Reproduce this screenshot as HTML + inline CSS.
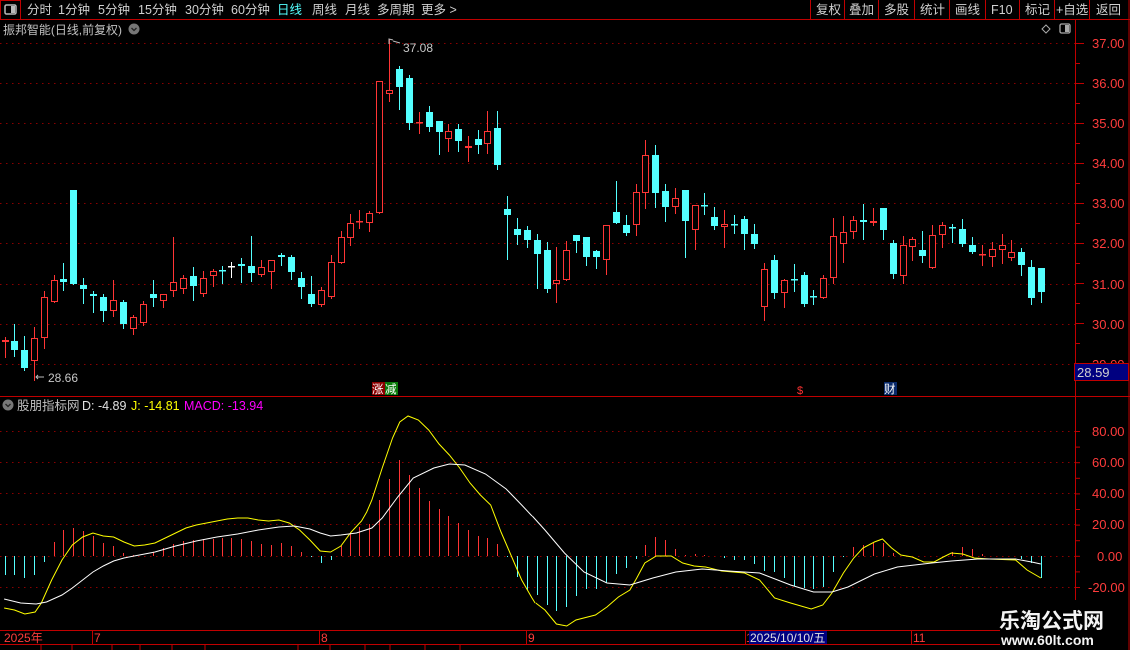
<!DOCTYPE html>
<html><head><meta charset="utf-8"><style>
html,body{margin:0;padding:0;background:#000;width:1130px;height:650px;overflow:hidden}
svg{display:block}
text{font-family:"Liberation Sans","Noto Sans CJK SC",sans-serif}
</style></head><body>
<svg id="s" width="1130" height="650" viewBox="0 0 1130 650" xmlns="http://www.w3.org/2000/svg">
<rect width="1130" height="650" fill="#000"/>
<!-- top bar -->
<line x1="0" y1="19.5" x2="1130" y2="19.5" stroke="#c00000"/>
<rect x="0.5" y="0.5" width="20" height="19" fill="none" stroke="#c00000"/>
<rect x="5" y="5" width="11" height="9" rx="1.5" fill="none" stroke="#bbb" stroke-width="1.5"/>
<rect x="11" y="6" width="4" height="7" fill="#bbb"/>
<g font-size="12.5" fill="#d0d0d0">
<text x="27" y="14">分时</text><text x="58" y="14">1分钟</text><text x="98" y="14">5分钟</text>
<text x="138" y="14">15分钟</text><text x="185" y="14">30分钟</text><text x="231" y="14">60分钟</text>
<text x="277" y="14" fill="#54ffff">日线</text><text x="312" y="14">周线</text><text x="345" y="14">月线</text>
<text x="377" y="14">多周期</text><text x="421" y="14">更多 &gt;</text>
<text x="816" y="14">复权</text><text x="849" y="14">叠加</text><text x="884" y="14">多股</text>
<text x="920" y="14">统计</text><text x="955" y="14">画线</text><text x="991" y="14">F10</text>
<text x="1025" y="14">标记</text><text x="1056" y="14">+自选</text><text x="1096" y="14">返回</text>
</g>
<g stroke="#c00000">
<line x1="810.5" y1="0" x2="810.5" y2="19"/><line x1="844.5" y1="0" x2="844.5" y2="19"/><line x1="878.5" y1="0" x2="878.5" y2="19"/>
<line x1="914.5" y1="0" x2="914.5" y2="19"/><line x1="949.5" y1="0" x2="949.5" y2="19"/><line x1="985.5" y1="0" x2="985.5" y2="19"/>
<line x1="1019.5" y1="0" x2="1019.5" y2="19"/><line x1="1054.5" y1="0" x2="1054.5" y2="19"/><line x1="1089.5" y1="0" x2="1089.5" y2="19"/>
<line x1="1129" y1="0" x2="1129" y2="650"/>
</g>
<text x="3" y="34" font-size="12" fill="#c0c0c0" textLength="119" lengthAdjust="spacingAndGlyphs">振邦智能(日线,前复权)</text>
<circle cx="134" cy="29" r="5.5" fill="#777"/><path d="M131.5 28 L134 30.5 L136.5 28" stroke="#222" fill="none" stroke-width="1.3"/>
<path d="M1046 25 L1050 29 L1046 33 L1042 29 Z" fill="none" stroke="#aaa"/>
<rect x="1060" y="24" width="10" height="9" rx="1.5" fill="none" stroke="#aaa" stroke-width="1.3"/><rect x="1065" y="25" width="4" height="7" fill="#aaa"/>
<!-- axes -->
<line x1="1075.5" y1="20" x2="1075.5" y2="630" stroke="#c00000"/>
<line x1="0" y1="396.5" x2="1130" y2="396.5" stroke="#c00000"/>
<g id="grid" stroke="#8b0000" stroke-dasharray="1.5 4.5"></g>
<g font-size="13" fill="#ff3c3c">
<text x="1092" y="48">37.00</text><text x="1092" y="88">36.00</text><text x="1092" y="128">35.00</text>
<text x="1092" y="168">34.00</text><text x="1092" y="208">33.00</text><text x="1092" y="248">32.00</text>
<text x="1092" y="289">31.00</text><text x="1092" y="329">30.00</text><text x="1092" y="369">29.00</text>
<text x="1092" y="436">80.00</text><text x="1092" y="467">60.00</text><text x="1092" y="498">40.00</text>
<text x="1092" y="529">20.00</text><text x="1097" y="561">0.00</text><text x="1088" y="592">-20.00</text>
</g>
<g id="ticks" stroke="#c00000"></g>
<rect x="1074.5" y="363.5" width="54" height="17" fill="#000080" stroke="#c00000"/>
<text x="1077" y="377" font-size="13" fill="#d0d0d0">28.59</text>
<g id="cand"></g>
<!-- markers -->
<path d="M389 44 L389 39 L393 40 M393 41 L400 43" stroke="#bbb" fill="none"/>
<text x="403" y="52" font-size="12" fill="#c8c8c8">37.08</text>
<path d="M44 377 L36 377 M38 375 L36 377 L38 379" stroke="#bbb" fill="none"/>
<text x="48" y="382" font-size="12" fill="#c8c8c8">28.66</text>
<rect x="372" y="382" width="13" height="13" fill="#8b0000"/><rect x="385" y="382" width="13" height="13" fill="#0a7a0a"/>
<text x="372" y="393" font-size="11.5" fill="#fff">涨</text><text x="385" y="393" font-size="11.5" fill="#fff">减</text>
<text x="797" y="394" font-size="11" fill="#ff3333">$</text>
<rect x="884" y="382" width="13" height="13" fill="#0a2a6a"/><text x="884" y="393" font-size="11.5" fill="#fff">财</text>
<!-- indicator header -->
<circle cx="8" cy="405" r="5.5" fill="#777"/><path d="M5.5 404 L8 406.5 L10.5 404" stroke="#222" fill="none" stroke-width="1.3"/>
<text x="17" y="410" font-size="12.5" fill="#c0c0c0">股朋指标网</text>
<text x="82" y="410" font-size="12.5" fill="#e0e0e0">D: -4.89</text>
<text x="131" y="410" font-size="12.5" fill="#ffff00">J: -14.81</text>
<text x="184" y="410" font-size="12.5" fill="#ff00ff">MACD: -13.94</text>
<g id="bars"></g>
<g transform="scale(1.033,1)">
<polyline fill="none" stroke="#ffff00" vector-effect="non-scaling-stroke" points="4,608 14,610 24,614 34,612 40,603 50,580 60,560 70,545 80,537 90,533 100,536 110,537 120,542 130,546 140,545 150,543 160,538 170,533 180,528 190,525 200,523 210,521 220,519 230,518 240,518 250,520 260,521 270,520 280,523 290,530 300,540 310,551 320,552 330,546 340,532 350,521 355,512 360,500 370,468 380,438 387,422 395,416 405,420 415,430 425,444 435,455 445,468 455,483 465,495 475,505 485,532 495,556 505,580 515,598 518,603"/>
<polyline fill="none" stroke="#ffffff" vector-effect="non-scaling-stroke" points="4,599 20,603 35,604 45,602 60,595 70,588 80,580 90,572 100,566 110,561 120,558 140,554 150,552 170,546 190,541 210,537 230,534 250,530 270,527 285,526 300,529 310,533 320,536 330,535 345,533 360,528 370,518 385,497 400,478 420,468 435,464 450,465 470,474 490,489 505,505 515,516"/>
</g>
<g transform="translate(530,0) scale(1.148,1) translate(-530,0)">
<polyline fill="none" stroke="#ffff00" vector-effect="non-scaling-stroke" points="535,603 543,610 553,624 562,626 570,620 587,615 597,607 607,597 617,590 623,578 630,563 640,556 653,556 663,563 673,566 683,567 697,571 717,573 730,580 743,598 757,603 775,609 785,605 793,593 803,573 812,558 820,548 830,542 837,539 845,548 853,555 863,557 873,562 882,562 890,557 897,553 907,554 917,558 930,559 953,560 963,570 975,578"/>
<polyline fill="none" stroke="#ffffff" vector-effect="non-scaling-stroke" points="532,516 543,530 560,553 577,572 597,583 617,585 637,578 657,572 680,569 703,571 730,573 757,585 777,592 793,592 807,587 830,574 850,567 880,563 897,561 920,559 953,559 967,562 975,564"/>
</g>
<!-- time axis -->
<line x1="0" y1="630.5" x2="1000" y2="630.5" stroke="#c00000"/>
<line x1="0" y1="644.5" x2="1000" y2="644.5" stroke="#c00000"/>
<g stroke="#c00000">
<line x1="92.5" y1="631" x2="92.5" y2="644"/><line x1="319.5" y1="631" x2="319.5" y2="644"/><line x1="526.5" y1="631" x2="526.5" y2="644"/>
<line x1="745.5" y1="631" x2="745.5" y2="644"/><line x1="911.5" y1="631" x2="911.5" y2="644"/>
<line x1="41" y1="645" x2="41" y2="650"/><line x1="72" y1="645" x2="72" y2="650"/><line x1="112" y1="645" x2="112" y2="650"/><line x1="140" y1="645" x2="140" y2="650"/><line x1="172" y1="645" x2="172" y2="650"/><line x1="205" y1="645" x2="205" y2="650"/><line x1="298" y1="645" x2="298" y2="650"/><line x1="330" y1="645" x2="330" y2="650"/><line x1="365" y1="645" x2="365" y2="650"/><line x1="390" y1="645" x2="390" y2="650"/><line x1="425" y1="645" x2="425" y2="650"/><line x1="460" y1="645" x2="460" y2="650"/>
</g>
<g font-size="12" fill="#ff3c3c">
<text x="4" y="642">2025年</text><text x="94" y="642">7</text><text x="321" y="642">8</text><text x="528" y="642">9</text><text x="746" y="642">1</text><text x="913" y="642">11</text>
</g>
<rect x="749" y="631" width="78" height="13" fill="#000080"/>
<text x="750" y="642" font-size="12" fill="#e0e0e0">2025/10/10/五</text>
<!-- watermark -->
<rect x="1000" y="600" width="128" height="50" fill="#000"/>
<text x="999" y="628" font-size="21" font-weight="bold" fill="#f4f4f4" font-family="'Noto Sans CJK SC',sans-serif">乐淘公式网</text>
<text x="1001" y="645" font-size="14" font-weight="bold" fill="#f4f4f4" font-family="'Liberation Serif',serif">www.60lt.com</text>
</svg>
<script>
var NS="http://www.w3.org/2000/svg";
function el(p,t,a){var e=document.createElementNS(NS,t);for(var k in a)e.setAttribute(k,a[k]);p.appendChild(e);return e;}
var g=document.getElementById('grid');
[43,83,123,163,203,243,284,324,364].forEach(function(y){el(g,'line',{x1:0,y1:y+.5,x2:1075,y2:y+.5});});
[431,462,493,524,556,587].forEach(function(y){el(g,'line',{x1:0,y1:y+.5,x2:1075,y2:y+.5});});
var tk=document.getElementById('ticks');
for(var y=43;y<=370;y+=20){el(tk,'line',{x1:1076,y1:y+.5,x2:(((y-43)%40)?1080:1084),y2:y+.5});}
for(var y=431;y<=600;y+=15.6){el(tk,'line',{x1:1076,y1:y+.5,x2:1080,y2:y+.5});}
var C=[
[4.5,340,342,337,357,'r'],[14,341,350,324,356,'c'],[24,350,368,336,370,'c'],[34,338,361,327,380,'r'],[44,297,338,291,348,'r'],
[54,280,302,275,302,'r'],[63,279,282,263,290,'c'],[73,190,284,190,284,'c'],[83,285,289,278,303,'c'],[93,294,296,291,312,'c'],
[103,297,311,294,321,'c'],[113,300,311,280,316,'r'],[123,302,324,300,328,'c'],[133,317,329,315,334,'r'],[143,304,323,301,325,'r'],
[153,294,298,280,306,'c'],[163,294,301,294,307,'r'],[173,282,291,237,296,'r'],[183,278,289,275,293,'r'],[193,276,286,267,300,'c'],
[203,278,294,271,296,'r'],[213,271,276,269,286,'r'],[222,270,271,266,283,'c'],[231,266,266,262,277,'w'],[241,264,266,258,282,'c'],
[251,266,273,236,281,'c'],[261,267,275,260,276,'r'],[271,260,272,260,288,'r'],[281,255,257,253,265,'c'],[291,257,272,255,279,'c'],
[301,278,287,272,298,'c'],[311,294,304,276,306,'c'],[321,290,305,287,306,'r'],[331,262,297,255,298,'r'],[341,237,263,231,263,'r'],
[350,223,238,214,245,'r'],[359,221,222,210,228,'r'],[369,213,223,211,231,'r'],[379,81,213,81,213,'r'],[389,90,94,39,101,'r'],
[399,69,87,66,109,'c'],[409,78,123,75,129,'c'],[419,122,123,112,133,'r'],[429,112,127,106,131,'c'],[439,121,132,121,154,'c'],
[448,131,139,124,151,'r'],[458,129,141,124,151,'c'],[468,146,148,136,161,'r'],[478,139,145,130,153,'c'],[487,131,144,111,153,'r'],
[497,128,165,111,169,'c'],[507,209,215,196,259,'c'],[517,229,235,218,244,'c'],[527,230,240,226,247,'c'],[537,240,254,234,288,'c'],
[547,250,289,242,292,'c'],[556,280,284,247,302,'r'],[566,250,280,241,280,'r'],[576,235,241,235,252,'c'],[586,237,257,237,265,'c'],
[596,251,257,250,268,'c'],[606,225,260,225,274,'r'],[616,212,223,181,223,'c'],[626,225,233,215,235,'c'],[636,192,225,184,235,'r'],
[645,155,193,140,208,'r'],[655,155,193,145,207,'c'],[665,191,207,184,221,'c'],[675,198,207,188,213,'r'],[685,190,221,190,257,'c'],
[695,205,230,205,249,'r'],[704,205,206,193,214,'c'],[714,217,226,207,229,'c'],[724,224,227,210,247,'r'],[734,224,225,215,233,'c'],
[744,219,234,216,249,'c'],[754,234,244,224,248,'c'],[764,269,307,263,320,'r'],[774,260,293,255,298,'c'],[784,280,293,279,307,'r'],
[794,279,280,264,291,'c'],[804,275,304,272,306,'c'],[813,296,297,290,304,'c'],[823,278,298,275,298,'r'],[833,236,278,218,283,'r'],
[843,232,244,216,262,'r'],[853,220,232,216,238,'r'],[863,220,222,204,239,'c'],[873,221,223,208,225,'r'],[883,208,230,208,239,'c'],
[893,243,274,240,278,'c'],[903,245,276,236,283,'r'],[912,239,247,237,260,'r'],[922,250,256,231,262,'c'],[932,235,268,225,268,'r'],
[942,225,235,222,247,'r'],[952,227,228,224,242,'c'],[962,229,244,219,246,'c'],[972,245,252,237,253,'c'],[982,254,255,245,265,'r'],
[992,249,257,242,266,'r'],[1002,245,250,234,263,'r'],[1011,252,258,240,260,'r'],[1021,252,265,248,275,'c'],[1031,267,298,260,304,'c'],
[1041,268,292,268,302,'c']];
var cg=document.getElementById('cand');
var RED='#ff3535',CY='#54ffff';
C.forEach(function(c){
 var x=Math.round(c[0])+.5,col=c[5]=='r'?RED:(c[5]=='c'?CY:'#fff');
 el(cg,'line',{x1:x,y1:c[3],x2:x,y2:c[4]+1,stroke:col});
 var h=c[2]-c[1];
 if(h<2){el(cg,'rect',{x:x-3.5,y:c[1],width:7,height:Math.max(h,1.5),fill:col});}
 else if(c[5]=='r'){el(cg,'rect',{x:x-3,y:c[1]+.5,width:6,height:h-1,fill:'#000',stroke:col});}
 else el(cg,'rect',{x:x-3.5,y:c[1],width:7,height:h,fill:col});
});
var B={1:575,2:575,3:578,4:575,5:562,32:557,33:563,34:560,52:557,53:577,54:590,55:595,56:605,57:611,58:607,59:596,60:589,61:589,62:583,63:574,64:568,65:559,
73:556,74:558,75:560,76:560,77:564,78:571,79:572,80:578,81:586,82:588,83:589,84:587,85:572,86:557,92:556,93:556,94:556,95:556,96:556,101:556,102:556,103:556,104:559,105:563,106:578};
var reds=[542,530,528,531,536,543,546,553,555,556,552,548,544,541,540,539,539,538,538,539,541,544,545,543,546,552];
reds.forEach(function(v,i){B[6+i]=v;});
[546,533,527,524,500,479,460,475,488,501,509,516,523,530,536,538,544].forEach(function(v,i){B[35+i]=v;});
[545,537,540,549,555,554,555].forEach(function(v,i){B[66+i]=v;});
[547,545,543,543,553].forEach(function(v,i){B[87+i]=v;});
[552,547,549,554].forEach(function(v,i){B[97+i]=v;});
var bg=document.getElementById('bars');
C.forEach(function(c,i){var v=B[i+1];if(v===undefined)return;var x=Math.round(c[0])+.5;
 el(bg,'line',{x1:x,y1:556,x2:x,y2:v,stroke:v>556?CY:RED});});
</script>
</body></html>
